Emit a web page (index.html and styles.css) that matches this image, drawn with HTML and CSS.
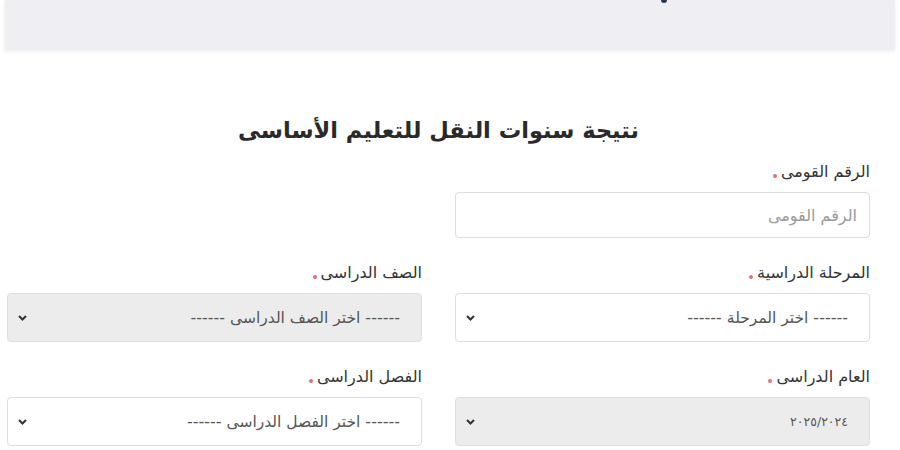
FILE: index.html
```html
<!DOCTYPE html>
<html lang="ar" dir="rtl">
<head>
<meta charset="utf-8">
<title>نتيجة سنوات النقل للتعليم الأساسى</title>
<link rel="stylesheet" href="styles.css">
</head>
<body>
<header class="topbar"><span class="topbar-mark"></span></header>
<main class="page">
  <h1 class="title">نتيجة سنوات النقل للتعليم الأساسى</h1>
  <div class="form-grid">
    <div class="field">
      <div class="label">الرقم القومى<span class="req"></span></div>
      <div class="input"><span class="placeholder">الرقم القومى</span></div>
    </div>
    <div class="field"></div>

    <div class="field">
      <div class="label">المرحلة الدراسية<span class="req"></span></div>
      <div class="select"><span class="value"><span class="dash">------</span> اختر المرحلة <span class="dash">------</span></span>
        <svg class="chev" width="9" height="6" viewBox="0 0 9 6"><polyline points="1,1 4.5,4.5 8,1" fill="none" stroke="#333" stroke-width="2"/></svg></div>
    </div>
    <div class="field">
      <div class="label">الصف الدراسى<span class="req"></span></div>
      <div class="select disabled"><span class="value"><span class="dash">------</span> اختر الصف الدراسى <span class="dash">------</span></span>
        <svg class="chev" width="9" height="6" viewBox="0 0 9 6"><polyline points="1,1 4.5,4.5 8,1" fill="none" stroke="#333" stroke-width="2"/></svg></div>
    </div>

    <div class="field">
      <div class="label">العام الدراسى<span class="req"></span></div>
      <div class="select disabled"><span class="value num">٢٠٢٥/٢٠٢٤</span>
        <svg class="chev" width="9" height="6" viewBox="0 0 9 6"><polyline points="1,1 4.5,4.5 8,1" fill="none" stroke="#333" stroke-width="2"/></svg></div>
    </div>
    <div class="field">
      <div class="label">الفصل الدراسى<span class="req"></span></div>
      <div class="select"><span class="value"><span class="dash">------</span> اختر الفصل الدراسى <span class="dash">------</span></span>
        <svg class="chev" width="9" height="6" viewBox="0 0 9 6"><polyline points="1,1 4.5,4.5 8,1" fill="none" stroke="#333" stroke-width="2"/></svg></div>
    </div>
  </div>
</main>
</body>
</html>
```
FILE: styles.css
```css
* { box-sizing: border-box; }
html, body { margin: 0; padding: 0; background: #fff; }
body {
  direction: rtl;
  font-family: "DejaVu Sans", "Noto Sans", sans-serif;
  color: #333;
  width: 900px;
  height: 450px;
  overflow: hidden;
}
.topbar {
  height: 50px;
  margin: 0 5px 0 4px;
  background: #efeef3;
  border-left: 1px solid #f6f6f8;
  box-shadow: 0 2px 4px rgba(0,0,0,0.06);
  position: relative;
}
.topbar-mark {
  position: absolute;
  top: 0;
  left: 656px;
  width: 6px;
  height: 3px;
  border-radius: 0 0 3px 3px;
  background: #2b3550;
}
.page {
  padding: 0 30px 0 7px;
}
.title {
  margin: 64px 0 16px;
  text-align: center;
  font-size: 22.5px;
  line-height: 32px;
  font-weight: bold;
  color: #2a2a2a;
}
.form-grid {
  display: grid;
  grid-template-columns: 415px 415px;
  column-gap: 33px;
  row-gap: 25px;
}
.label {
  height: 20px;
  line-height: 20px;
  font-size: 16px;
  color: #333;
  margin-bottom: 10px;
  display: flex;
  align-items: center;
}
.req {
  display: inline-block;
  width: 4px;
  height: 4px;
  border-radius: 50%;
  background: #e0707a;
  margin-right: 4px;
  margin-top: 7px;
}
.input {
  height: 46px;
  border: 1px solid #dcdcdc;
  border-radius: 4px;
  background: #fff;
  padding: 0 12px;
  display: flex;
  align-items: center;
}
.placeholder {
  font-size: 16px;
  color: #9a9a9a;
}
.select {
  height: 49px;
  border: 1px solid #dedede;
  border-radius: 4px;
  background: #fff;
  padding: 0 21px 0 10px;
  display: flex;
  align-items: center;
  justify-content: space-between;
}
.select.disabled {
  background: #ececec;
}
.value {
  font-size: 15.5px;
  color: #555;
}
.value.num {
  font-size: 12.5px;
}
.dash {
  letter-spacing: 3.2px;
  font-size: 16px;
}
.chev { display: block; }
```
